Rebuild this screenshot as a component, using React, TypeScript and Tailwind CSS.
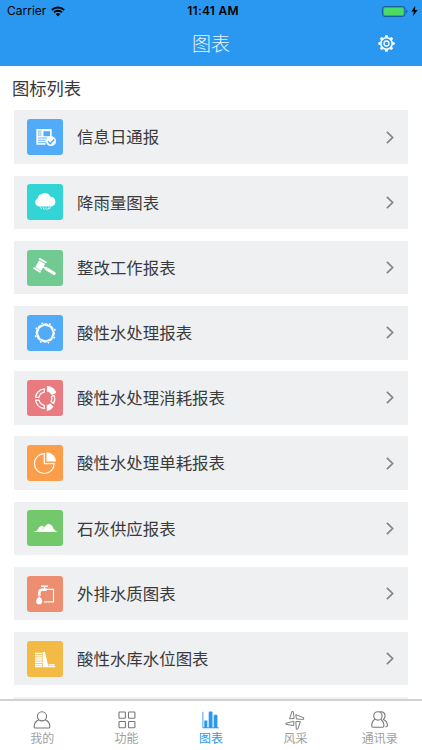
import type { ReactNode } from 'react';

interface Report {
  name: string;
  color: string;
  icon: ReactNode;
}

interface Tab {
  name: string;
  icon: ReactNode;
  active?: boolean;
}

const reports: Report[] = [
  {
    name: '信息日通报',
    color: 'bg-[#52abf9]',
    icon: (
      <>
        <path d="M9.3 10h15.4v8a6 6 0 0 0-6 7.800H9.300z" fill="#fff" opacity=".95" />
        <path d="M11 12.200h3.500M11 14.200h3.500M11 16.200h3.500M11 19h9M11 21.300h7.500M11 23.600h7" stroke="#52abf9" strokeWidth=".8" />
        <path d="M16.500 12.200h6.500v5h-6.500z" fill="#52abf9" />
        <circle cx="24" cy="22.300" r="5" fill="#fff" />
        <path d="m21 22.500 2.200 2.200 4-4.200" fill="none" stroke="#52abf9" strokeWidth="1.500" />
      </>
    ),
  },
  {
    name: '降雨量图表',
    color: 'bg-[#31d5d5]',
    icon: (
      <>
        <path d="M12.200 22.500a4.300 4.300 0 0 1-1.200-8.300 4 4 0 0 1 3.500-4 5.800 5.800 0 0 1 9 2.600 4.900 4.900 0 0 1 .9 9.700z" fill="#fff" />
        <path d="m13.700 23.700.5.700m2.100-.7.800 1.700m1.900-1.500v1m2.700-1.200-.8 1.700m2.600-1.700-.5.700" stroke="#fff" strokeWidth="1" strokeLinecap="round" />
      </>
    ),
  },
  {
    name: '整改工作报表',
    color: 'bg-[#70ca92]',
    icon: (
      <g stroke="#fff" strokeLinecap="round">
        <path d="m12.700 8.900 6 3.500M7.200 18.300l5.800 3.400" strokeWidth="1.800" />
        <path d="m12 10.600 6 3.500-3.800 6.600-6-3.500z" fill="#fff" stroke="none" />
        <path d="m16 16.700 3 1.800" strokeWidth="1.800" />
        <path d="m19.500 18.800 7.600 4.600" strokeWidth="3.200" />
      </g>
    ),
  },
  {
    name: '酸性水处理报表',
    color: 'bg-[#52abf9]',
    icon: (
      <g transform="translate(18.300 18)" fill="#fff">
        {[10, 55, 100, 145, 190, 235, 280, 325].map((angle) => (
          <g key={angle} transform={`rotate(${angle})`}>
            <path d="M-4.200-7.700C-1.800-10.800 2.300-10 3.900-6.100 1.500-7.200-.9-6.700-4.200-7.700z" />
            <circle cx="2.900" cy="-9.500" r="1" />
          </g>
        ))}
      </g>
    ),
  },
  {
    name: '酸性水处理消耗报表',
    color: 'bg-[#e97b80]',
    icon: (
      <g stroke="#fff" strokeWidth="1.200" fill="none" strokeLinejoin="round">
        <path d="M20.500 6.700c3.300.2 6 2 7.800 5v1.100l-3.500 1.500c-1-1.900-2.400-3-4.300-3.400z" fill="#fff" />
        <path d="M17.300 8.800v3.400a6.600 6.600 0 0 0-5.300 5.100H8.500a10 10 0 0 1 8.800-8.500z" />
        <path d="M8.600 20.200H12a6.600 6.600 0 0 0 5.300 5.100v3.300a10 10 0 0 1-8.700-8.400z" />
        <path d="m24.500 16.500 2.600-1.100a9.500 9.500 0 0 1-.6 8.100L24 21.600a6 6 0 0 0 .5-5.100z" />
        <path d="M20.300 25.500c1.200-.2 2-.6 2.900-1.300l2.500 2.600c-1.300 1.800-3 2.900-5.400 3.300z" fill="#fff" />
      </g>
    ),
  },
  {
    name: '酸性水处理单耗报表',
    color: 'bg-[#fc9e49]',
    icon: (
      <>
        <path d="M17.300 8.700a9.900 9.900 0 1 0 9.900 9.900h-9.900z" fill="none" stroke="#fff" strokeWidth="1.200" />
        <path d="M19.500 7.200a9.500 9.500 0 0 1 9.500 9.400h-9.500z" fill="#fff" />
      </>
    ),
  },
  {
    name: '石灰供应报表',
    color: 'bg-[#74c86c]',
    icon: (
      <path d="M5.800 21.900c3-.5 4.300-1.200 5.600-3.500 1.500-2.500 4-3.500 5.600-1.700-1 1.300-1.900 2.700-2.600 4 1.200-.9 2.700-3.200 4-4.900 2.200-2.900 5.700-2.300 7.100.7 1.200 2.700 2.800 5 5.400 5.500z" fill="#fff" />
    ),
  },
  {
    name: '外排水质图表',
    color: 'bg-[#ed8e71]',
    icon: (
      <>
        <path d="M14 10.300h7M17.500 10.500v2.500" stroke="#fff" strokeWidth="1.500" />
        <path d="M12.300 18.800v-2q0-3 3-3h4.500" fill="none" stroke="#fff" strokeWidth="2.500" />
        <path d="M19 13.400h7.500v12.500H17" fill="none" stroke="#fff" strokeWidth="1.200" />
        <path d="M10.800 18.200h3v1.500h-3z" fill="#fff" />
        <path d="M12.200 20.300c1.200 1.400 3.100 2.700 3.100 4.900a3.100 3.100 0 0 1-6.200 0c0-2.200 1.900-3.500 3.100-4.900z" fill="#fff" />
      </>
    ),
  },
  {
    name: '酸性水库水位图表',
    color: 'bg-[#f3ba45]',
    icon: (
      <>
        <path d="M8 12.500h6.800M8 14.700h7M8 16.900h7M8 19.100h7M8 21.300h7M8 23.500h7M8 25.500h7" stroke="#fff" strokeWidth="1.500" />
        <path d="M15.600 11H18l3.600 15.200h-6z" fill="#fff" />
        <path d="M21.500 23.800h6.200M21.500 25.700h6.700" stroke="#fff" strokeWidth="1.200" />
      </>
    ),
  },
];

const tabs: Tab[] = [
  {
    name: '我的',
    icon: (
      <>
        <circle cx="10" cy="5.300" r="4.600" />
        <path d="M6.700 8.800C3.800 10.200 2.100 12.700 2.100 15.700q0 1.300 1.300 1.300h13.200q1.300 0 1.300-1.300c0-3-1.700-5.500-4.600-6.900" />
      </>
    ),
  },
  {
    name: '功能',
    icon: (
      <>
        <rect x="2" y="1" width="6.400" height="6.300" rx=".7" />
        <rect x="11.500" y="1" width="6.400" height="6.300" rx=".7" />
        <rect x="2" y="10.500" width="6.400" height="6.300" rx=".7" />
        <rect x="11.500" y="10.500" width="6.400" height="6.300" rx=".7" />
      </>
    ),
  },
  {
    name: '图表',
    active: true,
    icon: (
      <>
        <path d="M1.900.8v16h16" strokeWidth=".9" />
        <path d="M3.300 9.500h3v7.400h-3zM7.700 1.500q0-1 1-1h1.800q1 0 1 1v15.400H7.700zM12.700 4.800q0-1 1-1h1.700q1 0 1 1v12.100h-3.700z" fill="currentColor" stroke="none" />
      </>
    ),
  },
  {
    name: '风采',
    icon: (
      <g strokeWidth=".95">
        <path d="M4.600 7.800 6.900.5l1.400.2.8 6.700z" />
        <path d="m10.800 3.600 8 3.200-.3 1.600-7.100-.4z" />
        <path d="M10.800 10.600h4.600l-2.600 7.600-1.500-.1z" />
        <path d="m.8 12.300 8-2-.1 4.300-7.700-1.300z" />
      </g>
    ),
  },
  {
    name: '通讯录',
    icon: (
      <>
        <circle cx="7.900" cy="4.900" r="4.200" />
        <path d="M4.900 8.300C2.700 9.700 1.700 12 1.700 14.700q0 1.500 1.400 1.500h9.300q1.500 0 1.500-1.500c0-2.700-1.200-5-3.300-6.400" />
        <path d="M9.700.9c3-.8 5.400 1.100 5.400 3.900q0 2.300-1.700 3.700c2.500 1.300 4 3.700 4 5.700q0 1.700-2 1.800" />
      </>
    ),
  },
];

function StatusBar() {
  return (
    <div className="grid h-[22px] grid-cols-3 items-center px-[7px] font-['Inter'] text-black">
      <div className="flex items-center gap-[5px]">
        <span className="text-[12px] leading-none">Carrier</span>
        <svg className="h-[11px] w-[14px]" viewBox="0 0 14 11" fill="none" stroke="currentColor">
          <path d="M.8 4a9 9 0 0 1 12.400 0M3 6.300a5.800 5.800 0 0 1 8 0" strokeWidth="1.900" />
          <path d="M4.700 8a3.400 3.400 0 0 1 4.600 0L7 10.400z" fill="currentColor" stroke="none" />
        </svg>
      </div>
      <div className="pl-1 text-center text-[12px] leading-none font-semibold tracking-[.25px] whitespace-nowrap">11:41 AM</div>
      <div className="-mr-[3px] flex items-center justify-end gap-[3px]">
        <svg className="h-[11px] w-[26px]" viewBox="0 0 26 11">
          <rect x=".5" y=".5" width="22.500" height="10" rx="2.500" fill="none" stroke="#17609f" />
          <rect x="2" y="2" width="19.500" height="7" rx="1.200" fill="#4cd964" />
          <path d="M24.200 3.800q1.300.5 1.300 1.700t-1.300 1.700z" fill="#17609f" />
        </svg>
        <svg className="h-[10px] w-[7px]" viewBox="0 0 7 10">
          <path d="M4.300 0 .3 5.600h2.500L2 10l4.700-6H4z" fill="currentColor" />
        </svg>
      </div>
    </div>
  );
}

function GearIcon() {
  return (
    <svg className="size-[17px]" viewBox="-8.500 -8.500 17 17" fill="none" stroke="#fff">
      <circle r="5.700" strokeWidth="1.600" />
      <circle r="2.500" strokeWidth="1.300" />
      {[0, 45, 90, 135, 180, 225, 270, 315].map((angle) => (
        <path key={angle} d="M-1.800-6-1.100-8.200H1.100L1.800-6z" fill="#fff" stroke="none" transform={`rotate(${angle})`} />
      ))}
    </svg>
  );
}

function ReportRow({ report }: { report: Report }) {
  return (
    <li className="flex h-[53.600px] shrink-0 items-center bg-[#eff0f2] pr-3.5 pl-[13px]">
      <div className={`size-9 rounded-[3px] ${report.color}`}>
        <svg className="size-9" viewBox="0 0 36 36" fill="none">
          {report.icon}
        </svg>
      </div>
      <span className="ml-3.5 flex-1 text-[16.450px] leading-[15.500px] text-[#3a3a3a]">{report.name}</span>
      <svg className="h-[13px] w-2" viewBox="0 0 8 13" fill="none" stroke="#858585" strokeWidth="1.700">
        <path d="m.9.900 5.700 5.600-5.700 5.600" />
      </svg>
    </li>
  );
}

export default function App() {
  return (
    <div className="flex h-[750px] w-[422px] flex-col overflow-hidden bg-white font-['Noto_Sans_CJK_SC',sans-serif]">
      <header className="h-[65.500px] shrink-0 bg-[#2a98f0]">
        <StatusBar />
        <div className="grid h-[42px] grid-cols-[1fr_auto_1fr] items-center">
          <span />
          <h1 className="-mt-0.5 text-[19px] leading-none font-light text-white/90">图表</h1>
          <button className="mr-[27px] justify-self-end">
            <GearIcon />
          </button>
        </div>
      </header>

      <main className="flex min-h-0 flex-1 flex-col overflow-hidden">
        <h2 className="flex h-[44.900px] shrink-0 items-center pl-3 text-[17.300px] leading-none text-[#3a3a3a]">图标列表</h2>
        <ul className="flex flex-col gap-[11.600px] px-3.5">
          {reports.map((report) => (
            <ReportRow key={report.name} report={report} />
          ))}
          <li className="h-[53.600px] shrink-0 bg-[#eff0f2]" />
        </ul>
      </main>

      <nav className="grid h-[51px] shrink-0 grid-cols-5 border-t-2 border-[#d2d2d2] bg-white">
        {tabs.map((tab) => (
          <a key={tab.name} className={`flex flex-col items-center pt-[9.500px] ${tab.active ? 'text-[#2a98f0]' : 'text-[#777]'}`}>
            <svg className="size-5" viewBox="0 0 20 20" fill="none" stroke="currentColor" strokeWidth="1.100" strokeLinejoin="round">
              {tab.icon}
            </svg>
            <span className={`mt-px text-[12px] leading-none ${tab.active ? '' : 'text-[#a0a0a0]'}`}>{tab.name}</span>
          </a>
        ))}
      </nav>
    </div>
  );
}
